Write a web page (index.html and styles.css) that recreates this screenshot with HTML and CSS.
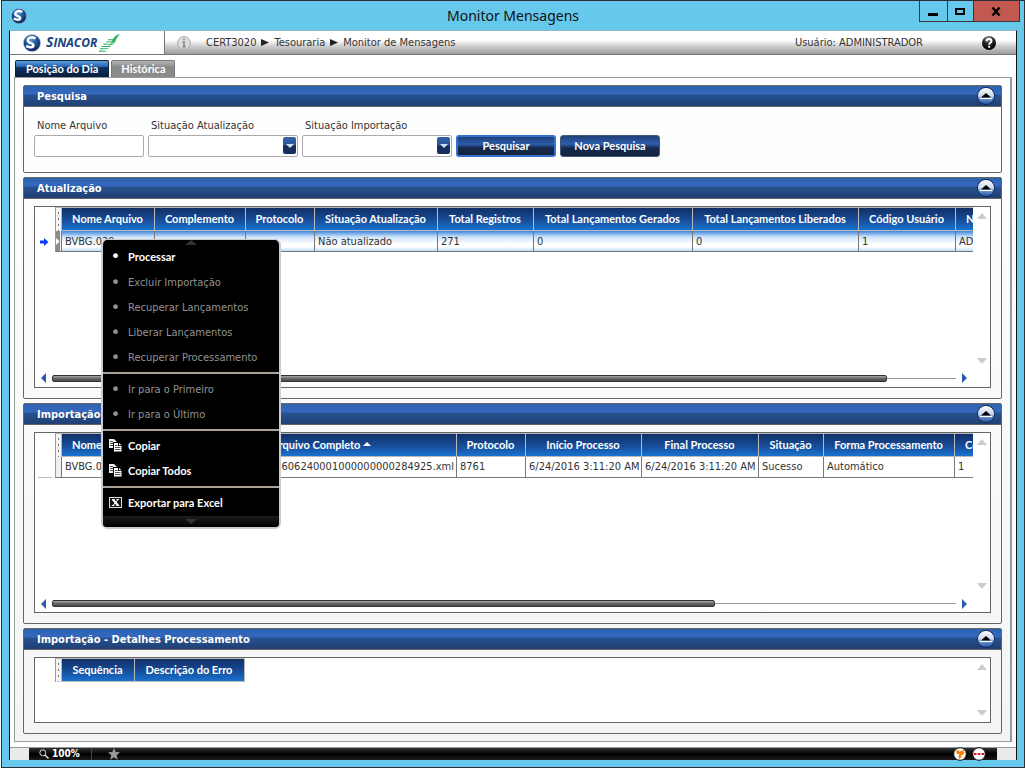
FILE: index.html
```html
<!DOCTYPE html>
<html lang="pt-BR">
<head>
<meta charset="utf-8">
<title>Monitor Mensagens</title>
<link rel="stylesheet" href="styles.css">
</head>
<body>
<svg class="defs" aria-hidden="true">
  <defs>
    <radialGradient id="ball" cx="45%" cy="30%" r="70%">
      <stop offset="0" stop-color="#5d93cf"/><stop offset=".5" stop-color="#1d5299"/><stop offset="1" stop-color="#0a2350"/>
    </radialGradient>
    <linearGradient id="knob" x1="0" y1="0" x2="0" y2="1">
      <stop offset="0" stop-color="#ffffff"/><stop offset=".5" stop-color="#c9d8ee"/><stop offset=".65" stop-color="#6f97d2"/><stop offset="1" stop-color="#1c4c9c"/>
    </linearGradient>
    <radialGradient id="dark" cx="45%" cy="20%" r="80%">
      <stop offset="0" stop-color="#999"/><stop offset=".5" stop-color="#222"/><stop offset="1" stop-color="#000"/>
    </radialGradient>
    <symbol id="i-logo" viewBox="0 0 18 18">
      <circle cx="9" cy="9" r="8.6" fill="url(#ball)" stroke="#b9cfe8" stroke-width=".6"/>
      <path d="M12.5 4.6C10 2.6 5.200 3 4.800 6.200C4.500 9.600 10.600 8.600 10.400 11.400C10.200 13.600 6.500 13.800 3.200 11.800" fill="none" stroke="#fff" stroke-width="2.600"/>
    </symbol>
    <symbol id="i-up" viewBox="0 0 20 20">
      <circle cx="10" cy="10" r="8.600" fill="url(#knob)" stroke="#122a55" stroke-width="1"/>
      <path d="M5 11.500L10 7L15 11.500Z" fill="#000"/>
      <path d="M4 12.500H16" stroke="#fff" stroke-width="1"/>
    </symbol>
    <symbol id="i-copy" viewBox="0 0 13 13">
      <path d="M0 0H5L7.500 2.500V9H0Z" fill="#eee"/>
      <path d="M1 2.500H4M1 4.500H4M1 6.500H4" stroke="#555"/>
      <path d="M4 3H9.500L13 6.500V13H4Z" fill="#000"/>
      <path d="M5 4H9V7H12.500V12.500H5Z" fill="#fff"/>
      <path d="M10 4L12.500 6.300H10Z" fill="#fff"/>
      <path d="M6 6.500H8.500M6 8.500H11.500M6 10.500H11.500" stroke="#555"/>
    </symbol>
  </defs>
</svg>

<div class="window">
  <header class="titlebar">
    <svg class="app-icon"><use href="#i-logo"/></svg>
    <h1>Monitor Mensagens</h1>
    <div class="winbtns">
      <button class="wb wb-min" aria-label="Minimizar"><svg viewBox="0 0 11 9"><path d="M0 7.500H10" stroke="#000" stroke-width="3"/></svg></button>
      <button class="wb wb-max" aria-label="Maximizar"><svg viewBox="0 0 11 9"><rect x="1" y="2" width="8" height="5" fill="none" stroke="#000" stroke-width="2"/></svg></button>
      <button class="wb wb-close" aria-label="Fechar"><svg viewBox="0 0 11 9"><path d="M1.500 .5L8.500 8.500M8.500 .5L1.500 8.500" stroke="#000" stroke-width="2.400"/></svg></button>
    </div>
  </header>

  <div class="client">
    <div class="topbar">
      <div class="brand">
        <svg class="brand-ball"><use href="#i-logo"/></svg>
        <span class="brand-name">S<small>INACOR</small></span>
        <svg class="brand-wing" viewBox="0 0 22 18"><path d="M0 17C9 15.500 12 9 14 5C16 1.500 18 .5 21 0C18 3 17 6 15 10Z" fill="#2eb56a"/><path d="M0 17.200H7M1 14.800H9.500M2.500 12.500H11.500M4.500 10.200H13M7 8H14M9 5.800H15" stroke="#2aa862" stroke-width="1.100"/><path d="M2 16H10M4 13.700H12M6 11.400H13.500M8 9.200H15" stroke="#fff" stroke-width=".8"/></svg>
      </div>
      <nav class="crumbs">
        <svg class="info" viewBox="0 0 14 14"><circle cx="7" cy="7" r="6.400" fill="#ddd" stroke="#aaa"/><path d="M7 2.500V4.300M5.500 6H7V10.500M5.300 10.800H8.800" stroke="#888" stroke-width="1.600" fill="none"/></svg>
        <span>CERT3020</span>
        <svg class="crumb-arrow" viewBox="0 0 8 7"><path d="M0 0L8 3.500L0 7Z"/></svg>
        <span>Tesouraria</span>
        <svg class="crumb-arrow" viewBox="0 0 8 7"><path d="M0 0L8 3.500L0 7Z"/></svg>
        <span>Monitor de Mensagens</span>
      </nav>
      <span class="user">Usuário: ADMINISTRADOR</span>
      <button class="help" aria-label="Ajuda"><svg viewBox="0 0 14 14"><circle cx="7" cy="7" r="7" fill="url(#dark)"/><path d="M4.500 5.200C4.500 2.200 9.500 2.200 9.500 5.200C9.500 6.800 7.200 6.800 7.200 8.800M7.200 9.800V11.800" fill="none" stroke="#fff" stroke-width="1.900"/></svg></button>
    </div>

    <div class="tabs">
      <button class="tab active">Posição do Dia</button>
      <button class="tab">Histórica</button>
    </div>

    <main class="pane">
      <section class="panel">
        <div class="panel-head"><h2>Pesquisa</h2><button class="collapse" aria-label="Recolher"><svg><use href="#i-up"/></svg></button></div>
        <form class="search">
          <div class="field name"><label for="arq">Nome Arquivo</label><input id="arq" type="text"></div>
          <div class="field"><label for="sa">Situação Atualização</label>
            <div class="select"><select id="sa"><option></option></select><span class="drop"></span></div></div>
          <div class="field"><label for="si">Situação Importação</label>
            <div class="select"><select id="si"><option></option></select><span class="drop"></span></div></div>
          <button type="button" class="btn focus">Pesquisar</button>
          <button type="button" class="btn">Nova Pesquisa</button>
        </form>
      </section>

      <section class="panel grow">
        <div class="panel-head"><h2>Atualização</h2><button class="collapse" aria-label="Recolher"><svg><use href="#i-up"/></svg></button></div>
        <div class="panel-body">
          <div class="grid">
            <div class="view">
              <table class="g1">
                <colgroup><col class="w20"><col class="w7"><col class="w93"><col class="w91"><col class="w69"><col class="w123"><col class="w96"><col class="w159"><col class="w166"><col class="w97"><col class="w100"></colgroup>
                <thead><tr><th class="blank"></th><th class="grip"></th><th>Nome Arquivo</th><th>Complemento</th><th>Protocolo</th><th>Situação Atualização</th><th>Total Registros</th><th>Total Lançamentos Gerados</th><th>Total Lançamentos Liberados</th><th>Código Usuário</th><th class="edge">Nome Usuário</th></tr></thead>
                <tbody><tr class="selected"><td class="mark"><svg viewBox="0 0 9 8"><path d="M0 2.500H4V0L8.500 4L4 8V5.500H0Z" fill="#0a3cff"/></svg></td><td class="handle"><svg viewBox="0 0 6 20"><path d="M0 0H4V20H0Z" fill="#8a8a8a"/><path d="M0 7L3.500 10.500L0 14Z" fill="#fff"/></svg></td><td>BVBG.029</td><td></td><td></td><td>Não atualizado</td><td>271</td><td>0</td><td>0</td><td>1</td><td>ADMINISTRADOR</td></tr></tbody>
              </table>
            </div>
            <div class="vscroll"><i class="tri-up"></i><i class="tri-down"></i></div>
            <div class="hscroll"><i class="tri-left"></i><div class="track"><div class="thumb long"></div></div><i class="tri-right"></i></div>
          </div>
        </div>
      </section>

      <section class="panel grow">
        <div class="panel-head"><h2>Importação</h2><button class="collapse" aria-label="Recolher"><svg><use href="#i-up"/></svg></button></div>
        <div class="panel-body">
          <div class="grid">
            <div class="view">
              <table class="g2">
                <colgroup><col class="w20"><col class="w7"><col class="w93"><col class="w302"><col class="w69"><col class="w116"><col class="w117"><col class="w65"><col class="w131"><col class="w100"></colgroup>
                <thead><tr><th class="blank"></th><th class="grip"></th><th>Nome Arquivo</th><th>Nome Arquivo Completo <svg class="sort" viewBox="0 0 8 4"><path d="M0 4L4 0L8 4Z" fill="#fff"/></svg></th><th>Protocolo</th><th>Início Processo</th><th>Final Processo</th><th>Situação</th><th>Forma Processamento</th><th class="edge">Código Usuário</th></tr></thead>
                <tbody><tr><td class="mark line"></td><td class="handle"></td><td>BVBG.029</td><td class="right">BVBG.029_201606240001000000000284925.xml</td><td>8761</td><td>6/24/2016 3:11:20 AM</td><td>6/24/2016 3:11:20 AM</td><td>Sucesso</td><td>Automático</td><td>1</td></tr></tbody>
              </table>
            </div>
            <div class="vscroll"><i class="tri-up"></i><i class="tri-down"></i></div>
            <div class="hscroll"><i class="tri-left"></i><div class="track"><div class="thumb short"></div></div><i class="tri-right"></i></div>
          </div>
        </div>
      </section>

      <section class="panel">
        <div class="panel-head"><h2>Importação - Detalhes Processamento</h2><button class="collapse" aria-label="Recolher"><svg><use href="#i-up"/></svg></button></div>
        <div class="panel-body">
          <div class="grid small">
            <div class="view">
              <table class="g3">
                <colgroup><col class="w20"><col class="w7"><col class="w73"><col class="w110"></colgroup>
                <thead><tr><th class="blank"></th><th class="grip"></th><th>Sequência</th><th>Descrição do Erro</th></tr></thead>
              </table>
            </div>
            <div class="vscroll"><i class="tri-up"></i><i class="tri-down"></i></div>
          </div>
        </div>
      </section>
    </main>

    <footer class="status">
      <div class="bar">
        <span class="zoom"><svg viewBox="0 0 10 10"><circle cx="3.800" cy="3.800" r="3" fill="none" stroke="#ddd"/><path d="M6 6L9.500 9.500" stroke="#ddd" stroke-width="1.500"/></svg>100%</span>
        <svg class="star" viewBox="0 0 12 12"><path d="M6 0L7.700 4L12 4.300L8.700 7.200L9.800 11.700L6 9.300L2.200 11.700L3.300 7.200L0 4.300L4.300 4Z" fill="#999"/></svg>
        <span class="lights">
          <svg viewBox="0 0 14 14"><circle cx="7" cy="7" r="6.300" fill="#fff" stroke="#111"/><path d="M3 4L5 3L6 4.500L11.500 3L10.500 5L11.500 6L9.500 8L8 8L8.500 10L6 12L5.500 9L6.500 7L4 7Z" fill="#f57c00"/></svg>
          <svg viewBox="0 0 14 14"><circle cx="7" cy="7" r="6.300" fill="#fff" stroke="#111"/><path d="M2 7H4.500M5.800 7H8.300M9.500 7H12" stroke="#e01010" stroke-width="2.200"/></svg>
        </span>
      </div>
    </footer>
  </div>

  <div class="menu">
    <div class="menu-cap"><svg viewBox="0 0 12 5"><path d="M0 5L6 0L12 5Z" fill="#333"/></svg></div>
    <button><span class="ic">•</span>Processar</button>
    <button disabled><span class="ic">•</span>Excluir Importação</button>
    <button disabled><span class="ic">•</span>Recuperar Lançamentos</button>
    <button disabled><span class="ic">•</span>Liberar Lançamentos</button>
    <button disabled><span class="ic">•</span>Recuperar Processamento</button>
    <hr>
    <button disabled><span class="ic">•</span>Ir para o Primeiro</button>
    <button disabled><span class="ic">•</span>Ir para o Último</button>
    <hr>
    <button><span class="ic"><svg><use href="#i-copy"/></svg></span>Copiar</button>
    <button><span class="ic"><svg><use href="#i-copy"/></svg></span>Copiar Todos</button>
    <hr>
    <button><span class="ic"><svg viewBox="0 0 13 13"><rect x=".5" y="1.500" width="12" height="10" fill="#111" stroke="#ddd"/><path d="M4 3.500L9 9.500" stroke="#fff" stroke-width="2.200"/><path d="M9 3.500L4 9.500M2.800 3.500H5.500M7.500 3.500H10M2.800 9.500H5.500M7.500 9.500H10.300" stroke="#fff"/></svg></span>Exportar para Excel</button>
    <div class="menu-foot"><svg viewBox="0 0 12 5"><path d="M0 0L6 5L12 0Z" fill="#333"/></svg></div>
  </div>
</div>
</body>
</html>
```
FILE: styles.css
```css
*{box-sizing:border-box}
body{margin:0;background:#fff;color:#333;font:11px/14px "DejaVu Sans Condensed","DejaVu Sans",sans-serif}
button{margin:0;padding:0;border:0;background:none;font:inherit;color:inherit}
svg{display:block}
.defs{position:absolute;width:0;height:0}

.window{position:relative;display:flex;flex-direction:column;min-height:calc(100vh - 2px);margin:0 1px 2px;background:#66c8ea;border:1px solid #2b2f38;padding:0 7px 7px}
.titlebar{display:grid;grid-template-columns:98px 1fr 98px;height:29px;align-items:center}
.app-icon{width:16px;height:16px;margin-left:2px}
h1{margin:0;text-align:center;font:14px/20px "Noto Sans",sans-serif;color:#111}
.winbtns{display:flex;align-self:start;border:1px solid #3c3337;border-top:0;height:21px;margin-right:-3px}
.wb{display:flex;align-items:center;justify-content:center;width:26px;border-right:1px solid #3c3337}
.wb svg{width:11px;height:9px}
.wb-min{width:28px}
.wb-close{flex:1;border-right:0;background:#c2584f}

.client{flex:1;display:flex;flex-direction:column;background:#fff;border:solid #111;border-width:0 1px;border-top:1px solid #8fb7c8}
.topbar{display:flex;align-items:center;height:24px;border-bottom:1px solid #777;background:linear-gradient(#fff 40%,#d0d0d0 65%,#9c9c9c)}
.brand{display:flex;align-items:center;align-self:stretch;width:155px;padding-left:13px;background:#fff;border-right:1px solid #777}
.brand-ball{width:18px;height:18px}
.brand-name{margin-left:5px;font:italic bold 14px/18px "Open Sans",sans-serif;color:#17437f}
.brand-name small{font-size:12px}
.brand-wing{width:22px;height:18px;margin-left:2px}
.crumbs{display:flex;align-items:center;gap:5px;flex:1;padding-left:12px}
.info{width:14px;height:14px;margin-right:10px}
.crumb-arrow{width:8px;height:7px;fill:#222}
.user{margin-right:59px}
.help{margin-right:20px}
.help svg{width:14px;height:14px}

.tabs{display:flex;gap:2px;padding:5px 0 0 5px}
.tab{height:17px;padding:0 9px;border:1px solid #777;border-bottom:0;border-radius:2px 2px 0 0;background:linear-gradient(#b5b5b5,#888 40%,#8c8c8c);color:#fff;font:bold 11px/16px Lato,sans-serif}
.active{padding:0 10px;border-color:#123;background:linear-gradient(#5b9be0,#2a65b0 35%,#0e3563 40%,#061d3c)}
.pane{flex:1;display:flex;flex-direction:column;gap:4px;margin:0 4px 5px;padding:7px 8px;border:solid #999;border-width:1px 2px 1px 1px;background:linear-gradient(#fff,#f4f4f4)}

.panel{display:flex;flex-direction:column;border:1px solid #666;border-radius:2px;min-width:0}
.grow{flex:1}
.panel-head{display:flex;align-items:center;justify-content:space-between;height:21px;padding:0 5px 0 13px;border-bottom:1px solid #666;background:linear-gradient(#2c63ae,#3468c0 40%,#26528f 45%,#203f74)}
h2{margin:0;padding-top:2px;font:bold 11px/18px "DejaVu Sans Condensed","DejaVu Sans",sans-serif;color:#fff}
.collapse svg{width:20px;height:20px}
.panel-body{flex:1;display:flex;padding:7px 10px 10px}

.search{display:flex;align-items:flex-end;gap:4px;padding:12px 10px 15px}
.field{display:flex;flex-direction:column;gap:2px;width:150px}
.name{width:110px}
.field label{padding-left:3px}
.field input,.field select{display:block;width:100%;height:22px;border:1px solid #aaa;border-radius:2px;background:#fff;appearance:none;padding:0 4px;font:inherit}
.select{position:relative}
.drop{position:absolute;top:2px;right:2px;width:13px;height:17px;border-radius:2px;background:linear-gradient(#3461a8,#2a5599 45%,#152d58 55%,#14305f);pointer-events:none}
.drop::after{content:"";position:absolute;left:3px;top:7px;border:solid transparent;border-width:4px 4px 0;border-top-color:#cfe0f5}
.btn{width:100px;height:22px;border:1px solid #44587c;border-radius:3px;background:linear-gradient(#213f78,#2d5eac 40%,#16294d 60%,#14233f);color:#fff;font:bold 11px/18px Lato,sans-serif}
.focus{border:2px solid #3572cf}

.grid{flex:1;display:grid;grid-template-columns:minmax(0,1fr) 17px;grid-template-rows:1fr 17px;min-width:0;border:1px solid #666;background:#fff}
.small{grid-template-rows:64px}
.view{overflow:hidden}
table{table-layout:fixed;border-collapse:separate;border-spacing:0}
.g1{width:1021px}
.g2{width:1020px}
.g3{width:210px}
.w7{width:7px}
.w20{width:20px}
.w65{width:65px}
.w69{width:69px}
.w73{width:73px}
.w91{width:91px}
.w93{width:93px}
.w96{width:96px}
.w97{width:97px}
.w100{width:100px}
.w110{width:110px}
.w116{width:116px}
.w117{width:117px}
.w123{width:123px}
.w131{width:131px}
.w159{width:159px}
.w166{width:166px}
.w302{width:302px}
th{height:24px;padding:0 1px 0 0;border:solid #b9b9b9;border-width:1px 1px 1px 0;background:linear-gradient(#122f66,#164a94 50%,#1a72d0);color:#fff;font:bold 11px/14px Lato,sans-serif;white-space:nowrap;overflow:hidden;text-align:center}
th.edge{text-align:left;padding-left:10px}
th.blank{border:0;background:#fff}
th.grip{border-left:1px solid #999;border-bottom:0;background:radial-gradient(circle,#777 1px,transparent 1px) 0 2px/5px 6px #f4f4f4}
.sort{display:inline-block;width:8px;height:4px;margin-bottom:3px}
td{height:21px;padding:1px 2px 0 3px;border:solid #777;border-width:0 1px 1px 0;white-space:nowrap;overflow:hidden}
.selected td{background:linear-gradient(#3f86dc,#cfe4fb 30%,#fff 65%,#fff 80%,#bcd9f6)}
td.mark,.selected td.mark{padding:0 0 0 5px;border:0;background:#fff}
.mark svg{width:9px;height:8px}
td.line{background:linear-gradient(#bbb,#bbb) 3px 100%/14px 1px no-repeat}
td.handle{padding:0;background:#f0f0f0;border-left:1px solid #999}
.handle svg{width:6px;height:20px}
td.right{text-align:right}
.vscroll{display:flex;flex-direction:column;align-items:center;justify-content:space-between;padding:6px 0}
.tri-up{border:solid transparent;border-width:0 5px 6px;border-bottom-color:#ccc}
.tri-down{border:solid transparent;border-width:6px 5px 0;border-top-color:#ccc}
.hscroll{display:flex;align-items:center;gap:6px;padding:0 6px}
.tri-left{border:solid transparent;border-width:5px 5px 5px 0;border-right-color:#2a5db0}
.tri-right{border:solid transparent;border-width:5px 0 5px 5px;border-left-color:#2a5db0}
.track{flex:1;background:linear-gradient(#999,#999) 0 50%/100% 1px no-repeat}
.thumb{height:7px;border:1px solid #333;border-radius:2px;background:linear-gradient(#aaa,#666 50%,#4c4c4c)}
.long{width:92.400%}
.short{width:73.300%}

.status{display:flex;background:#eaeaea;padding:0 19px;border-top:1px solid #999}
.bar{flex:1;display:flex;align-items:center;height:12px;background:linear-gradient(#333,#000 50%,#1c1c1c);color:#fff}
.zoom{display:flex;align-items:center;gap:3px;width:63px;height:12px;padding-left:10px;border-right:1px solid #444;font:bold 10px/12px "DejaVu Sans Condensed",sans-serif}
.zoom svg{width:10px;height:10px}
.star{width:12px;height:12px;margin-left:16px}
.lights{display:flex;gap:5px;margin-left:auto;padding-right:11px}
.lights svg{width:14px;height:14px}

.menu{position:absolute;left:99px;top:238px;width:180px;border:solid #ccc;border-width:1px 2px 2px;border-radius:6px;background:#000;overflow:hidden;color:#fff}
.menu-cap{display:flex;align-items:flex-end;justify-content:center;height:5px}
.menu-foot{display:flex;justify-content:center;height:11px;padding-top:3px;background:linear-gradient(#1c1c1c,#000)}
.menu svg{width:13px;height:13px}
.menu .menu-cap svg,.menu .menu-foot svg{width:12px;height:5px}
.menu button{display:flex;align-items:center;width:100%;height:25px;padding-bottom:2px;text-align:left;font-weight:bold;font-family:Lato,sans-serif}
.menu button:disabled{padding-bottom:0;color:#929292;font-weight:normal;font-family:"DejaVu Sans Condensed","DejaVu Sans",sans-serif}
.menu .ic{display:flex;justify-content:center;width:25px;font:16px/16px "DejaVu Sans",sans-serif}
.menu hr{height:2px;margin:2px 0 3px;border:0;background:#aaa296}
```
